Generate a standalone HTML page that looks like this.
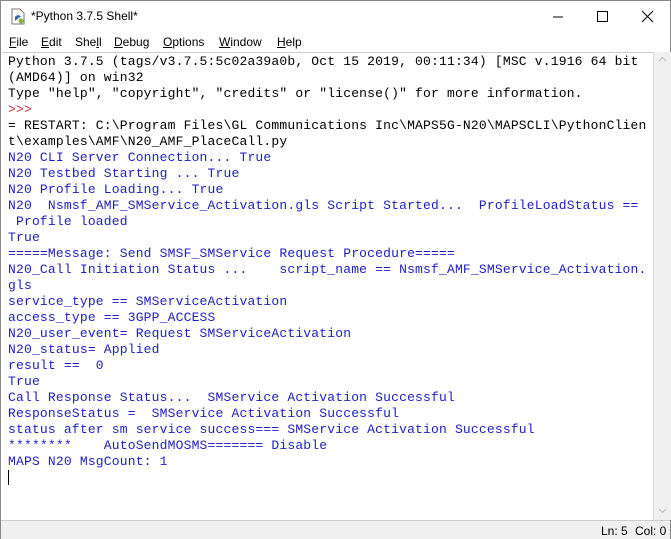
<!DOCTYPE html>
<html><head><style>
body{margin:0;width:671px;height:539px;overflow:hidden;background:#f0f0f0;font-family:"Liberation Sans",sans-serif;position:relative}
.win{position:absolute;left:0;top:0;width:669px;height:537px;border:1px solid #888;background:#fff}
.title{position:absolute;left:0;top:0;width:669px;height:31px;background:#fff;font-size:12px}
.title .t{position:absolute;left:30px;top:8px;color:#000}
.menu{position:absolute;left:0;top:31px;width:669px;height:20px;background:#fff;font-size:12px}
.menu span{position:absolute;top:3px}
.txt{position:absolute;left:1px;top:51px;width:651px;height:467px;border-top:1px solid #ccc;background:#fff;overflow:hidden}
pre{margin:0;position:absolute;left:6px;top:1px;font-family:"Liberation Mono",monospace;font-size:13px;letter-spacing:0.18px;line-height:16px;color:#000}
.b{color:#2020c8}.r{color:#c03030}
.sb{position:absolute;left:652px;top:51px;width:17px;height:468px;background:#f0f0f0;border-left:1px solid #ddd}
.status{position:absolute;left:0;top:519px;width:669px;height:18px;background:#f0f0f0;border-top:1px solid #ccc;font-size:12px}
</style></head><body>
<div class="win">
<div class="title">
<svg style="position:absolute;left:9px;top:7px" width="16" height="17" viewBox="0 0 16 17"><path d="M2 1h8l4 4v11H2z" fill="#fff" stroke="#777"/><path d="M5 9c2-3 5-2 6 0-2 0-3 2-6 4z" fill="#3a6ab0"/><circle cx="11" cy="13" r="2.5" fill="#8bb43a"/></svg>
<span class="t">*Python 3.7.5 Shell*</span>
<svg style="position:absolute;left:550px;top:8px" width="110" height="16"><path d="M2 8h10" stroke="#000"/><rect x="46.5" y="2.5" width="10" height="10" fill="none" stroke="#000"/><path d="M91 2l11 11M102 2l-11 11" stroke="#000"/></svg>
</div>
<div class="menu">
<span style="left:8px"><u>F</u>ile</span><span style="left:40px"><u>E</u>dit</span><span style="left:74px">She<u>l</u>l</span><span style="left:113px"><u>D</u>ebug</span><span style="left:162px"><u>O</u>ptions</span><span style="left:218px"><u>W</u>indow</span><span style="left:276px"><u>H</u>elp</span>
</div>
<div class="txt"><pre>Python 3.7.5 (tags/v3.7.5:5c02a39a0b, Oct 15 2019, 00:11:34) [MSC v.1916 64 bit
(AMD64)] on win32
Type "help", "copyright", "credits" or "license()" for more information.
<span class="r">&gt;&gt;&gt; </span>
= RESTART: C:\Program Files\GL Communications Inc\MAPS5G-N20\MAPSCLI\PythonClien
t\examples\AMF\N20_AMF_PlaceCall.py
<span class="b">N20 CLI Server Connection... True
N20 Testbed Starting ... True
N20 Profile Loading... True
N20  Nsmsf_AMF_SMService_Activation.gls Script Started...  ProfileLoadStatus ==
 Profile loaded
True
=====Message: Send SMSF_SMService Request Procedure=====
N20_Call Initiation Status ...    script_name == Nsmsf_AMF_SMService_Activation.
gls
service_type == SMServiceActivation
access_type == 3GPP_ACCESS
N20_user_event= Request SMServiceActivation
N20_status= Applied
result ==  0
True
Call Response Status...  SMService Activation Successful
ResponseStatus =  SMService Activation Successful
status after sm service success=== SMService Activation Successful
********    AutoSendMOSMS======= Disable
MAPS N20 MsgCount: 1</span>
<span style="border-left:1px solid #000">&#8203;</span></pre></div>
<div class="sb"><svg style="position:absolute;left:4px;top:4px" width="9" height="6"><path d="M1 5l3.5-3.5L8 5" stroke="#bbb" fill="none"/></svg><svg style="position:absolute;left:4px;top:456px" width="9" height="6"><path d="M1 1l3.5 3.5L8 1" stroke="#bbb" fill="none"/></svg></div>
<div class="status"><span style="position:absolute;left:600px;top:3px">Ln: 5</span><span style="position:absolute;left:634px;top:3px">Col: 0</span></div>
</div>
</body></html>
